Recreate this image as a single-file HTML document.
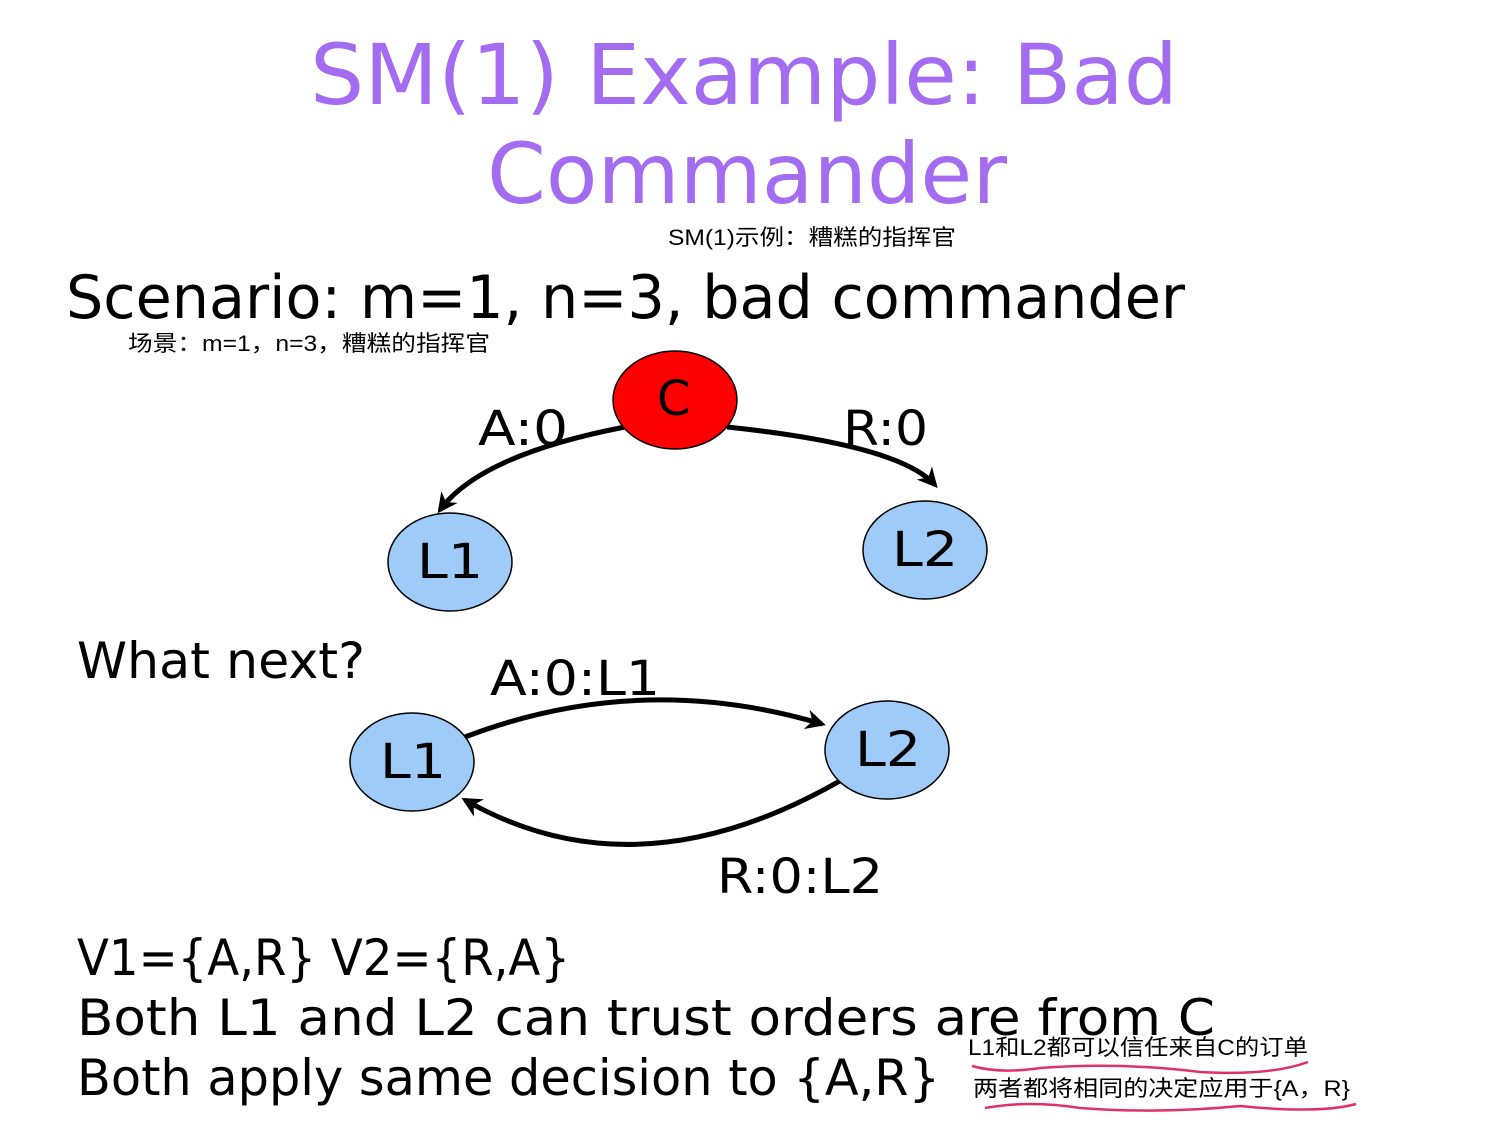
<!DOCTYPE html>
<html><head><meta charset="utf-8"><style>
html,body{margin:0;padding:0;background:#fff;}
svg{display:block}
.h{font-family:"DejaVu Sans","Liberation Sans",sans-serif;}
.z{font-family:"Liberation Sans","Noto Sans CJK SC",sans-serif;}
</style></head><body>
<svg width="1500" height="1125" viewBox="0 0 1500 1125">
<defs><marker id="ar" markerWidth="10" markerHeight="10" refX="8" refY="5" orient="auto" markerUnits="userSpaceOnUse"><path d="M0,0 L10,5 L0,10 L3,5 Z" fill="#000"/></marker>
<marker id="a2" viewBox="0 0 10 10" markerWidth="20" markerHeight="20" refX="8" refY="5" orient="auto" markerUnits="userSpaceOnUse"><path d="M0,0 L10,5 L0,10 L3,5 Z" fill="#000"/></marker></defs>
<g class="h" fill="#a46cf0">
<text x="310" y="104" font-size="84" textLength="868" lengthAdjust="spacingAndGlyphs">SM(1) Example: Bad</text>
<text x="487" y="203" font-size="84" textLength="520" lengthAdjust="spacingAndGlyphs">Commander</text>
</g>
<text class="z" x="668" y="245" font-size="22" textLength="288" lengthAdjust="spacingAndGlyphs">SM(1)示例：糟糕的指挥官</text>
<text class="h" x="66" y="318" font-size="60" textLength="1119" lengthAdjust="spacingAndGlyphs">Scenario: m=1, n=3, bad commander</text>
<text class="z" x="128" y="351" font-size="22" textLength="362" lengthAdjust="spacingAndGlyphs">场景：m=1，n=3，糟糕的指挥官</text>
<g stroke="#000" stroke-width="5" fill="none">
<path d="M625,427 Q480,455 440,510" marker-end="url(#a2)"/>
<path d="M727,427 Q900,445 935,485" marker-end="url(#a2)"/>
<path d="M465,737 Q640,670 822,724" marker-end="url(#a2)"/>
<path d="M850,775 Q640,900 465,800" marker-end="url(#a2)"/>
</g>
<g stroke="#000" stroke-width="1.5">
<ellipse cx="675" cy="400" rx="62" ry="49" fill="#f00"/>
<ellipse cx="450" cy="562" rx="62" ry="49" fill="#9ecbf7"/>
<ellipse cx="925" cy="550" rx="62" ry="49" fill="#9ecbf7"/>
<ellipse cx="412" cy="762" rx="62" ry="49" fill="#9ecbf7"/>
<ellipse cx="887" cy="750" rx="62" ry="49" fill="#9ecbf7"/>
</g>
<g class="h" font-size="48" fill="#000">
<text x="657" y="415">C</text>
<text x="417" y="578" textLength="66" lengthAdjust="spacingAndGlyphs">L1</text>
<text x="892" y="566" textLength="66" lengthAdjust="spacingAndGlyphs">L2</text>
<text x="380" y="778" textLength="66" lengthAdjust="spacingAndGlyphs">L1</text>
<text x="855" y="766" textLength="66" lengthAdjust="spacingAndGlyphs">L2</text>
<text x="478" y="445" textLength="90" lengthAdjust="spacingAndGlyphs">A:0</text>
<text x="843" y="445" textLength="85" lengthAdjust="spacingAndGlyphs">R:0</text>
<text x="490" y="695" textLength="170" lengthAdjust="spacingAndGlyphs">A:0:L1</text>
<text x="717" y="893" textLength="166" lengthAdjust="spacingAndGlyphs">R:0:L2</text>
<text x="77" y="678" font-size="50" textLength="288" lengthAdjust="spacingAndGlyphs">What next?</text>
<text x="77" y="975" font-size="50" textLength="493" lengthAdjust="spacingAndGlyphs">V1={A,R} V2={R,A}</text>
<text x="77" y="1035" font-size="50" textLength="1138" lengthAdjust="spacingAndGlyphs">Both L1 and L2 can trust orders are from C</text>
<text x="77" y="1095" font-size="50" textLength="863" lengthAdjust="spacingAndGlyphs">Both apply same decision to {A,R}</text>
</g>
<text class="z" x="968" y="1055" font-size="22" textLength="340" lengthAdjust="spacingAndGlyphs">L1和L2都可以信任来自C的订单</text>
<text class="z" x="973" y="1096" font-size="22" textLength="377" lengthAdjust="spacingAndGlyphs">两者都将相同的决定应用于{A，R}</text>
<g stroke="#e0306a" stroke-width="2.5" fill="none">
<path d="M972,1066 Q1000,1074 1040,1068 Q1120,1062 1200,1072 Q1270,1076 1308,1062"/>
<path d="M985,1108 Q1030,1100 1080,1108 Q1160,1114 1240,1106 Q1320,1114 1356,1104"/>
</g>
</svg>
</body></html>
